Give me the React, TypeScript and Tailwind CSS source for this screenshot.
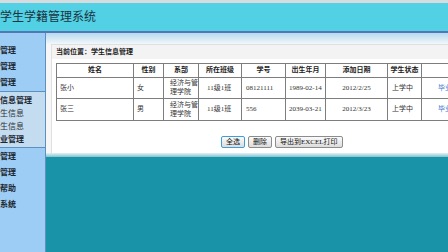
import React from "react";

const FONT = '"Liberation Serif", "Noto Sans CJK SC", serif';

interface Student {
  name: string;
  sex: string;
  dept: string[];
  klass: string;
  no: string;
  birth: string;
  added: string;
  status: string;
}

const students: Student[] = [
  { name: "张小", sex: "女", dept: ["经济与管", "理学院"], klass: "11级1班", no: "08121111", birth: "1989-02-14", added: "2012/2/25", status: "上学中" },
  { name: "张三", sex: "男", dept: ["经济与管", "理学院"], klass: "11级1班", no: "556", birth: "2039-03-21", added: "2012/3/23", status: "上学中" },
];

const cols = [
  { label: "姓名", w: "w-[77px]" },
  { label: "性别", w: "w-[30px]" },
  { label: "系部", w: "w-[35px]" },
  { label: "所在班级", w: "w-[43px]" },
  { label: "学号", w: "w-[44px]" },
  { label: "出生年月", w: "w-[40px]" },
  { label: "添加日期", w: "w-[62px]" },
  { label: "学生状态", w: "w-[34px]" },
  { label: "毕业", w: "w-[84px]" },
];

function SideItem({ text, bold = true }: { text: string; bold?: boolean }) {
  return (
    <div className={`whitespace-nowrap text-[8px] leading-none ${bold ? "font-bold text-[#1d2730]" : "font-normal text-[#333]"}`}>
      {text}
    </div>
  );
}

function Btn({ children, focus }: { children: React.ReactNode; focus?: boolean }) {
  return (
    <button
      className={`h-[12px] whitespace-nowrap rounded-[2px] border bg-gradient-to-b from-[#fbfbfb] to-[#dcdcdc] px-[4px] text-[7px] leading-none text-[#111] ${
        focus ? "border-[#3d9fd9]" : "border-[#8c8c8c]"
      }`}
    >
      {children}
    </button>
  );
}

export default function App() {
  return (
    <div className="flex h-[252px] w-[448px] flex-col overflow-hidden bg-white" style={{ fontFamily: FONT }}>
      <div className="h-[3px] bg-[#d6dbde]" />
      <div className="flex h-[28px] items-center bg-[#52d0e4]">
        <span className="text-[12px] leading-none text-[#1c3440]">学生学籍管理系统</span>
      </div>
      <div className="h-[2px] bg-[#5576b4]" />

      <div className="flex min-w-0 flex-1">
        {/* sidebar */}
        <div className="flex w-[46px] shrink-0 flex-col border-r border-[#5d8fbf] bg-[#9dcdf4]">
          <div className="flex h-[59px] flex-col gap-[8px] border-b border-[#5d8fbf] pt-[14px]">
            <SideItem text="管理" />
            <SideItem text="管理" />
            <SideItem text="管理" />
          </div>
          <div className="flex h-[56px] flex-col gap-[5px] border-b border-[#5d8fbf] bg-[#c3dcf0] pt-[5px]">
            <SideItem text="信息管理" />
            <SideItem text="生信息" bold={false} />
            <SideItem text="生信息" bold={false} />
            <SideItem text="业管理" />
          </div>
          <div className="flex flex-col gap-[8px] pt-[5px]">
            <SideItem text="管理" />
            <SideItem text="管理" />
            <SideItem text="帮助" />
            <SideItem text="系统" />
          </div>
        </div>

        {/* main */}
        <div className="flex min-w-0 flex-1 flex-col overflow-hidden">
          <div className="h-[11px] bg-gradient-to-b from-[#b6d9ef] to-[#f2f7fa]" />
          <div className="h-[109px] bg-[#f7f7f7] pl-[5px]">
            <div className="flex h-full flex-col border-l border-t border-[#e0e0e0] bg-white">
              <div className="flex h-[14px] items-center bg-[#f3f3f3] pl-[4px] text-[7px] font-bold leading-none text-[#222]">
                当前位置：学生信息管理
              </div>
              <div className="ml-[4px] mt-[4px] w-[449px] min-w-[449px] shrink-0">
                <table className="w-[449px] table-fixed border-collapse text-[7px] leading-[9px] text-[#333]">
                  <colgroup>
                    {cols.map((c) => (
                      <col key={c.label} className={c.w} />
                    ))}
                  </colgroup>
                  <thead>
                    <tr className="h-[14px]">
                      {cols.map((c) => (
                        <th key={c.label} className="border border-[#7d7d7d] text-center font-bold text-[#222]">
                          {c.label}
                        </th>
                      ))}
                    </tr>
                  </thead>
                  <tbody>
                    {students.map((s, i) => (
                      <tr key={s.name} className={i === 0 ? "h-[21px]" : "h-[22px]"}>
                        <td className="border border-[#7d7d7d] pl-[3px]">{s.name}</td>
                        <td className="border border-[#7d7d7d] pl-[3px]">{s.sex}</td>
                        <td className="border border-[#7d7d7d] pl-[6px]">
                          {s.dept[0]}
                          <br />
                          {s.dept[1]}
                        </td>
                        <td className="border border-[#7d7d7d] pl-[8px]">{s.klass}</td>
                        <td className="border border-[#7d7d7d] pl-[4px]">{s.no}</td>
                        <td className="border border-[#7d7d7d] pl-[3px]">{s.birth}</td>
                        <td className="border border-[#7d7d7d] text-center">{s.added}</td>
                        <td className="border border-[#7d7d7d] pl-[4px]">{s.status}</td>
                        <td className="border border-[#7d7d7d] pl-[16px] text-[#3a78d0]">毕业</td>
                      </tr>
                    ))}
                  </tbody>
                </table>
              </div>
              <div className="ml-[169px] mt-[15px] flex gap-[3px]">
                <Btn focus>全选</Btn>
                <Btn>删除</Btn>
                <Btn>导出到EXCEL打印</Btn>
              </div>
            </div>
          </div>
          <div className="h-[4px] bg-gradient-to-b from-[#e4f0f6] to-[#7cc3d2]" />
          <div className="flex-1 bg-[#1893a8]" />
        </div>
      </div>
    </div>
  );
}
